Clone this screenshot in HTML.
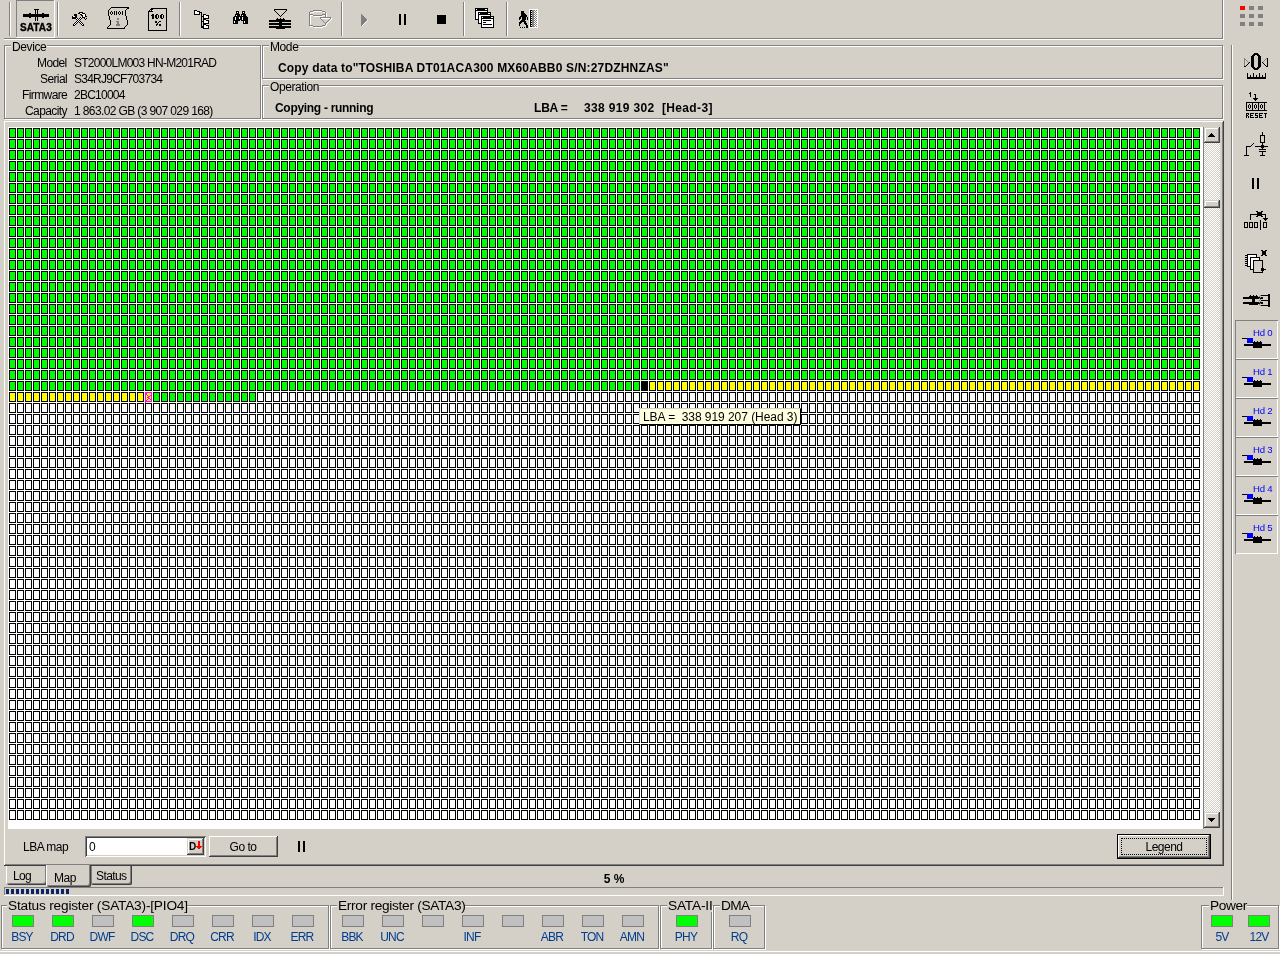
<!DOCTYPE html>
<html><head><meta charset="utf-8"><style>
html,body{margin:0;padding:0;}
body{width:1280px;height:954px;background:#d4d0c8;position:relative;overflow:hidden;font-family:"Liberation Sans",sans-serif;}
body>div,body>svg{position:absolute;}
.t{position:absolute;will-change:transform;}
svg{display:block;}
</style></head><body>
<div style="left:9px;top:2px;width:1px;height:34px;background:#808080;"></div>
<div style="left:10px;top:2px;width:1px;height:34px;background:#ffffff;"></div>
<div style="left:16px;top:0px;width:1px;height:37px;background:#808080;"></div>
<div style="left:16px;top:0px;width:38px;height:1px;background:#808080;"></div>
<div style="left:54px;top:0px;width:1px;height:38px;background:#ffffff;"></div>
<div style="left:16px;top:37px;width:39px;height:1px;background:#ffffff;"></div>
<div style="left:57px;top:2px;width:1px;height:34px;background:#808080;"></div>
<div style="left:58px;top:2px;width:1px;height:34px;background:#ffffff;"></div>
<div style="left:179px;top:2px;width:1px;height:34px;background:#808080;"></div>
<div style="left:180px;top:2px;width:1px;height:34px;background:#ffffff;"></div>
<div style="left:341px;top:2px;width:1px;height:34px;background:#808080;"></div>
<div style="left:342px;top:2px;width:1px;height:34px;background:#ffffff;"></div>
<div style="left:463px;top:2px;width:1px;height:34px;background:#808080;"></div>
<div style="left:464px;top:2px;width:1px;height:34px;background:#ffffff;"></div>
<div style="left:506px;top:2px;width:1px;height:34px;background:#808080;"></div>
<div style="left:507px;top:2px;width:1px;height:34px;background:#ffffff;"></div>
<div style="left:4px;top:38px;width:1219px;height:1px;background:#808080;"></div>
<div style="left:4px;top:39px;width:1220px;height:1px;background:#ffffff;"></div>
<div style="left:1222px;top:0px;width:1px;height:39px;background:#808080;"></div>
<div style="left:1223px;top:0px;width:1px;height:40px;background:#ffffff;"></div>
<svg style="left:23px;top:9px;" width="26" height="12" shape-rendering="crispEdges"><path fill="#000" d="M11 0h5v1h-5zM12 1h1v1h-1zM14 1h1v1h-1zM12 2h1v1h-1zM14 2h1v1h-1zM12 3h1v1h-1zM14 3h1v1h-1zM6 4h2v1h-2zM12 4h1v1h-1zM14 4h1v1h-1zM19 4h2v1h-2zM0 5h26v1h-26zM0 6h26v1h-26zM0 7h26v1h-26zM6 8h2v1h-2zM12 8h1v1h-1zM14 8h1v1h-1zM19 8h2v1h-2zM12 9h1v1h-1zM14 9h1v1h-1zM12 10h1v1h-1zM14 10h1v1h-1zM12 11h1v1h-1zM14 11h1v1h-1z"/></svg>
<div class="t" style="left:20px;top:23px;font-size:10px;line-height:10px;font-weight:bold;letter-spacing:0.1px;-webkit-text-stroke:0.35px #000">SATA3</div>
<svg style="left:72px;top:12px;" width="15" height="14" shape-rendering="crispEdges"><path fill="#000" d="M7 0h4v1h-4zM6 1h2v1h-2zM10 1h3v1h-3zM2 2h3v1h-3zM8 2h2v1h-2zM13 2h1v1h-1zM2 3h3v1h-3zM9 3h2v1h-2zM13 3h1v1h-1zM0 4h1v1h-1zM3 4h2v1h-2zM10 4h1v1h-1zM13 4h2v1h-2zM0 5h5v1h-5zM8 5h1v1h-1zM10 5h3v1h-3zM0 6h4v1h-4zM5 6h1v1h-1zM7 6h1v1h-1zM9 6h1v1h-1zM12 6h1v1h-1zM14 6h1v1h-1zM4 7h1v1h-1zM6 7h1v1h-1zM8 7h1v1h-1zM13 7h1v1h-1zM5 8h1v1h-1zM7 8h1v1h-1zM4 9h1v1h-1zM6 9h1v1h-1zM8 9h1v1h-1zM3 10h1v1h-1zM5 10h1v1h-1zM7 10h1v1h-1zM9 10h1v1h-1zM2 11h1v1h-1zM4 11h1v1h-1zM8 11h1v1h-1zM10 11h1v1h-1zM1 12h1v1h-1zM3 12h1v1h-1zM9 12h1v1h-1zM11 12h1v1h-1zM1 13h2v1h-2zM10 13h2v1h-2z"/><path fill="#fff" d="M8 1h2v1h-2zM10 2h3v1h-3zM11 3h2v1h-2zM1 4h2v1h-2zM11 4h2v1h-2zM9 5h1v1h-1zM4 6h1v1h-1zM8 6h1v1h-1zM5 7h1v1h-1zM7 7h1v1h-1zM6 8h1v1h-1zM5 9h1v1h-1zM7 9h1v1h-1zM4 10h1v1h-1zM8 10h1v1h-1zM3 11h1v1h-1zM9 11h1v1h-1zM2 12h1v1h-1zM10 12h1v1h-1z"/></svg>
<svg style="left:106px;top:7px;" width="24" height="22" shape-rendering="crispEdges"><path fill="#000" d="M5 0h18v1h-18zM4 1h1v1h-1zM21 1h2v1h-2zM3 2h1v1h-1zM20 2h1v1h-1zM2 3h1v1h-1zM19 3h1v1h-1zM2 4h1v1h-1zM5 4h1v1h-1zM8 4h1v1h-1zM10 4h1v1h-1zM13 4h1v1h-1zM16 4h1v1h-1zM19 4h1v1h-1zM2 5h1v1h-1zM4 5h1v1h-1zM6 5h1v1h-1zM8 5h1v1h-1zM10 5h1v1h-1zM12 5h1v1h-1zM14 5h1v1h-1zM16 5h1v1h-1zM19 5h1v1h-1zM2 6h1v1h-1zM4 6h1v1h-1zM6 6h1v1h-1zM8 6h1v1h-1zM10 6h1v1h-1zM12 6h1v1h-1zM14 6h1v1h-1zM16 6h1v1h-1zM19 6h1v1h-1zM2 7h1v1h-1zM5 7h1v1h-1zM8 7h1v1h-1zM10 7h1v1h-1zM13 7h1v1h-1zM16 7h1v1h-1zM19 7h1v1h-1zM2 8h1v1h-1zM19 8h1v1h-1zM3 9h1v1h-1zM20 9h1v1h-1zM3 10h1v1h-1zM20 10h1v1h-1zM3 11h1v1h-1zM20 11h1v1h-1zM3 12h1v1h-1zM20 12h1v1h-1zM4 13h1v1h-1zM21 13h1v1h-1zM4 14h1v1h-1zM21 14h1v1h-1zM4 15h1v1h-1zM21 15h1v1h-1zM4 16h1v1h-1zM21 16h1v1h-1zM4 17h1v1h-1zM21 17h1v1h-1zM3 18h1v1h-1zM20 18h1v1h-1zM2 19h1v1h-1zM19 19h1v1h-1zM1 20h1v1h-1zM18 20h1v1h-1zM1 21h18v1h-18z"/></svg>
<svg style="left:116px;top:18px;" width="4" height="8" shape-rendering="crispEdges"><path fill="#808080" d="M1 0h2v1h-2zM1 1h2v1h-2zM0 3h3v1h-3zM1 4h2v1h-2zM1 5h2v1h-2zM0 6h4v1h-4zM0 7h4v1h-4z"/></svg>
<svg style="left:148px;top:8px;" width="19" height="23" shape-rendering="crispEdges"><path fill="#000" d="M3 0h16v1h-16zM2 1h3v1h-3zM18 1h1v1h-1zM1 2h1v1h-1zM3 2h2v1h-2zM18 2h1v1h-1zM0 3h5v1h-5zM18 3h1v1h-1zM0 4h1v1h-1zM18 4h1v1h-1zM0 5h1v1h-1zM18 5h1v1h-1zM0 6h1v1h-1zM4 6h2v1h-2zM8 6h2v1h-2zM13 6h2v1h-2zM18 6h1v1h-1zM0 7h1v1h-1zM3 7h3v1h-3zM7 7h2v1h-2zM10 7h1v1h-1zM12 7h2v1h-2zM15 7h1v1h-1zM18 7h1v1h-1zM0 8h1v1h-1zM4 8h2v1h-2zM7 8h2v1h-2zM10 8h1v1h-1zM12 8h2v1h-2zM15 8h1v1h-1zM18 8h1v1h-1zM0 9h1v1h-1zM4 9h2v1h-2zM7 9h2v1h-2zM10 9h1v1h-1zM12 9h2v1h-2zM15 9h1v1h-1zM18 9h1v1h-1zM0 10h1v1h-1zM4 10h2v1h-2zM8 10h2v1h-2zM13 10h2v1h-2zM18 10h1v1h-1zM0 11h1v1h-1zM18 11h1v1h-1zM0 12h1v1h-1zM18 12h1v1h-1zM0 13h1v1h-1zM7 13h2v1h-2zM11 13h2v1h-2zM18 13h1v1h-1zM0 14h1v1h-1zM7 14h2v1h-2zM10 14h1v1h-1zM18 14h1v1h-1zM0 15h1v1h-1zM9 15h1v1h-1zM18 15h1v1h-1zM0 16h1v1h-1zM8 16h2v1h-2zM11 16h2v1h-2zM18 16h1v1h-1zM0 17h1v1h-1zM8 17h1v1h-1zM11 17h2v1h-2zM18 17h1v1h-1zM0 18h1v1h-1zM18 18h1v1h-1zM0 19h1v1h-1zM18 19h1v1h-1zM0 20h1v1h-1zM18 20h1v1h-1zM0 21h1v1h-1zM18 21h1v1h-1zM0 22h19v1h-19z"/></svg>
<svg style="left:152px;top:10px;" width="1" height="1" shape-rendering="crispEdges"><path fill="#fff" d="M0 0h1v1h-1z"/></svg>
<svg style="left:194px;top:10px;" width="6" height="5" shape-rendering="crispEdges"><path fill="#000" d="M0 0h3v1h-3zM0 1h1v1h-1zM3 1h3v1h-3zM0 2h1v1h-1zM5 2h1v1h-1zM0 3h1v1h-1zM5 3h1v1h-1zM0 4h6v1h-6z"/><path fill="#fff" d="M1 1h2v1h-2zM1 2h4v1h-4zM1 3h4v1h-4z"/></svg>
<svg style="left:200px;top:12px;" width="3" height="16" shape-rendering="crispEdges"><path fill="#000" d="M0 0h2v1h-2zM1 1h1v1h-1zM1 2h1v1h-1zM1 3h1v1h-1zM1 4h1v1h-1zM1 5h1v1h-1zM1 6h1v1h-1zM1 7h1v1h-1zM1 8h1v1h-1zM1 9h1v1h-1zM1 10h1v1h-1zM1 11h1v1h-1zM1 12h1v1h-1zM1 13h1v1h-1zM1 14h1v1h-1zM1 15h2v1h-2z"/></svg>
<svg style="left:203px;top:14px;" width="6" height="5" shape-rendering="crispEdges"><path fill="#000" d="M0 0h3v1h-3zM0 1h1v1h-1zM3 1h3v1h-3zM0 2h1v1h-1zM5 2h1v1h-1zM0 3h1v1h-1zM5 3h1v1h-1zM0 4h6v1h-6z"/><path fill="#fff" d="M1 1h2v1h-2zM1 2h4v1h-4zM1 3h4v1h-4z"/></svg>
<div style="left:202px;top:16px;width:1px;height:1px;background:#000;"></div>
<svg style="left:203px;top:19px;" width="6" height="5" shape-rendering="crispEdges"><path fill="#000" d="M0 0h3v1h-3zM0 1h1v1h-1zM3 1h3v1h-3zM0 2h1v1h-1zM5 2h1v1h-1zM0 3h1v1h-1zM5 3h1v1h-1zM0 4h6v1h-6z"/><path fill="#fff" d="M1 1h2v1h-2zM1 2h4v1h-4zM1 3h4v1h-4z"/></svg>
<div style="left:202px;top:21px;width:1px;height:1px;background:#000;"></div>
<svg style="left:203px;top:24px;" width="6" height="5" shape-rendering="crispEdges"><path fill="#000" d="M0 0h3v1h-3zM0 1h1v1h-1zM3 1h3v1h-3zM0 2h1v1h-1zM5 2h1v1h-1zM0 3h1v1h-1zM5 3h1v1h-1zM0 4h6v1h-6z"/><path fill="#fff" d="M1 1h2v1h-2zM1 2h4v1h-4zM1 3h4v1h-4z"/></svg>
<div style="left:202px;top:26px;width:1px;height:1px;background:#000;"></div>
<svg style="left:233px;top:11px;" width="15" height="13" shape-rendering="crispEdges"><path fill="#000" d="M3 0h3v1h-3zM9 0h3v1h-3zM3 1h1v1h-1zM5 1h1v1h-1zM9 1h1v1h-1zM11 1h1v1h-1zM3 2h3v1h-3zM9 2h3v1h-3zM2 3h5v1h-5zM8 3h5v1h-5zM2 4h1v1h-1zM4 4h3v1h-3zM8 4h1v1h-1zM10 4h3v1h-3zM1 5h13v1h-13zM0 6h2v1h-2zM3 6h3v1h-3zM7 6h2v1h-2zM10 6h5v1h-5zM0 7h2v1h-2zM3 7h3v1h-3zM7 7h2v1h-2zM10 7h5v1h-5zM0 8h2v1h-2zM3 8h6v1h-6zM10 8h5v1h-5zM0 9h7v1h-7zM8 9h7v1h-7zM0 10h1v1h-1zM2 10h3v1h-3zM10 10h1v1h-1zM12 10h3v1h-3zM0 11h1v1h-1zM2 11h3v1h-3zM10 11h1v1h-1zM12 11h3v1h-3zM0 12h5v1h-5zM10 12h5v1h-5z"/><path fill="#fff" d="M4 1h1v1h-1zM10 1h1v1h-1zM3 4h1v1h-1zM9 4h1v1h-1zM2 6h1v1h-1zM6 6h1v1h-1zM9 6h1v1h-1zM2 7h1v1h-1zM6 7h1v1h-1zM9 7h1v1h-1zM2 8h1v1h-1zM9 8h1v1h-1zM1 10h1v1h-1zM11 10h1v1h-1zM1 11h1v1h-1zM11 11h1v1h-1z"/></svg>
<svg style="left:269px;top:9px;" width="22" height="20" shape-rendering="crispEdges"><path fill="#000" d="M5 0h13v1h-13zM5 1h1v1h-1zM17 1h1v1h-1zM6 2h1v1h-1zM16 2h1v1h-1zM7 3h1v1h-1zM15 3h1v1h-1zM8 4h1v1h-1zM14 4h1v1h-1zM9 5h1v1h-1zM13 5h1v1h-1zM10 6h1v1h-1zM12 6h1v1h-1zM11 7h1v1h-1zM8 9h1v1h-1zM11 9h1v1h-1zM14 9h1v1h-1zM7 10h9v1h-9zM0 11h22v1h-22zM0 12h22v1h-22zM10 13h3v1h-3zM0 14h22v1h-22zM0 15h22v1h-22zM10 16h3v1h-3zM0 17h22v1h-22zM0 18h22v1h-22zM7 19h9v1h-9z"/></svg>
<svg style="left:309px;top:10px;" width="23" height="18" shape-rendering="crispEdges"><path fill="#808080" d="M4 0h9v1h-9zM1 1h3v1h-3zM13 1h3v1h-3zM0 2h1v1h-1zM16 2h1v1h-1zM0 3h1v1h-1zM16 3h1v1h-1zM0 4h4v1h-4zM13 4h4v1h-4zM0 5h1v1h-1zM4 5h9v1h-9zM16 5h1v1h-1zM0 6h1v1h-1zM16 6h1v1h-1zM0 7h1v1h-1zM11 7h11v1h-11zM0 8h1v1h-1zM11 8h1v1h-1zM21 8h1v1h-1zM0 9h1v1h-1zM12 9h1v1h-1zM20 9h1v1h-1zM0 10h1v1h-1zM13 10h1v1h-1zM19 10h1v1h-1zM0 11h1v1h-1zM14 11h1v1h-1zM18 11h1v1h-1zM0 12h1v1h-1zM15 12h1v1h-1zM17 12h1v1h-1zM0 13h1v1h-1zM16 13h1v1h-1zM0 14h1v1h-1zM16 14h1v1h-1zM0 15h4v1h-4zM13 15h3v1h-3zM4 16h9v1h-9z"/><path fill="#fff" d="M5 1h8v1h-8zM2 2h3v1h-3zM14 2h2v1h-2zM1 3h1v1h-1zM17 3h1v1h-1zM17 4h1v1h-1zM1 5h3v1h-3zM14 5h2v1h-2zM17 5h1v1h-1zM1 6h1v1h-1zM5 6h9v1h-9zM17 6h1v1h-1zM1 7h1v1h-1zM1 8h1v1h-1zM12 8h9v1h-9zM22 8h1v1h-1zM1 9h1v1h-1zM22 9h1v1h-1zM1 10h1v1h-1zM21 10h1v1h-1zM1 11h1v1h-1zM20 11h1v1h-1zM1 12h1v1h-1zM19 12h1v1h-1zM1 13h1v1h-1zM18 13h1v1h-1zM1 14h1v1h-1zM17 14h1v1h-1zM17 15h1v1h-1zM1 16h3v1h-3zM14 16h3v1h-3zM5 17h9v1h-9z"/></svg>
<svg style="left:361px;top:14px;" width="8" height="13" shape-rendering="crispEdges"><path fill="#808080" d="M0 0h1v1h-1zM0 1h2v1h-2zM0 2h3v1h-3zM0 3h4v1h-4zM0 4h5v1h-5zM0 5h6v1h-6zM0 6h6v1h-6zM0 7h5v1h-5zM0 8h4v1h-4zM0 9h3v1h-3zM0 10h2v1h-2zM0 11h1v1h-1z"/></svg>
<svg style="left:361px;top:14px;" width="8" height="13" shape-rendering="crispEdges"><path fill="#fff" d="M6 6h1v1h-1zM5 7h1v1h-1zM4 8h1v1h-1zM3 9h1v1h-1zM2 10h1v1h-1zM1 11h1v1h-1z"/></svg>
<div style="left:399px;top:14px;width:2px;height:11px;background:#000;"></div>
<div style="left:404px;top:14px;width:2px;height:11px;background:#000;"></div>
<div style="left:437px;top:15px;width:9px;height:9px;background:#000;"></div>
<svg style="left:475px;top:8px;" width="13" height="12" shape-rendering="crispEdges"><path fill="#000" d="M0 0h13v1h-13zM0 1h1v1h-1zM2 1h8v1h-8zM12 1h1v1h-1zM0 2h13v1h-13zM0 3h1v1h-1zM12 3h1v1h-1zM0 4h1v1h-1zM12 4h1v1h-1zM0 5h1v1h-1zM12 5h1v1h-1zM0 6h1v1h-1zM12 6h1v1h-1zM0 7h1v1h-1zM12 7h1v1h-1zM0 8h1v1h-1zM12 8h1v1h-1zM0 9h1v1h-1zM12 9h1v1h-1zM0 10h1v1h-1zM12 10h1v1h-1zM0 11h13v1h-13z"/><path fill="#fff" d="M1 1h1v1h-1zM10 1h2v1h-2zM1 3h11v1h-11zM1 4h11v1h-11zM1 5h11v1h-11zM1 6h11v1h-11zM1 7h11v1h-11zM1 8h11v1h-11zM1 9h11v1h-11zM1 10h11v1h-11z"/></svg>
<svg style="left:478px;top:12px;" width="13" height="12" shape-rendering="crispEdges"><path fill="#000" d="M0 0h13v1h-13zM0 1h1v1h-1zM2 1h8v1h-8zM12 1h1v1h-1zM0 2h13v1h-13zM0 3h1v1h-1zM12 3h1v1h-1zM0 4h1v1h-1zM12 4h1v1h-1zM0 5h1v1h-1zM12 5h1v1h-1zM0 6h1v1h-1zM12 6h1v1h-1zM0 7h1v1h-1zM12 7h1v1h-1zM0 8h1v1h-1zM12 8h1v1h-1zM0 9h1v1h-1zM12 9h1v1h-1zM0 10h1v1h-1zM12 10h1v1h-1zM0 11h13v1h-13z"/><path fill="#fff" d="M1 1h1v1h-1zM10 1h2v1h-2zM1 3h11v1h-11zM1 4h11v1h-11zM1 5h11v1h-11zM1 6h11v1h-11zM1 7h11v1h-11zM1 8h11v1h-11zM1 9h11v1h-11zM1 10h11v1h-11z"/></svg>
<svg style="left:481px;top:16px;" width="13" height="12" shape-rendering="crispEdges"><path fill="#000" d="M0 0h13v1h-13zM0 1h1v1h-1zM2 1h8v1h-8zM12 1h1v1h-1zM0 2h13v1h-13zM0 3h1v1h-1zM12 3h1v1h-1zM0 4h1v1h-1zM12 4h1v1h-1zM0 5h1v1h-1zM12 5h1v1h-1zM0 6h1v1h-1zM12 6h1v1h-1zM0 7h1v1h-1zM12 7h1v1h-1zM0 8h1v1h-1zM12 8h1v1h-1zM0 9h1v1h-1zM12 9h1v1h-1zM0 10h1v1h-1zM12 10h1v1h-1zM0 11h13v1h-13z"/><path fill="#fff" d="M1 1h1v1h-1zM10 1h2v1h-2zM1 3h11v1h-11zM1 4h11v1h-11zM1 5h11v1h-11zM1 6h11v1h-11zM1 7h11v1h-11zM1 8h11v1h-11zM1 9h11v1h-11zM1 10h11v1h-11z"/></svg>
<div style="left:483px;top:20px;width:8px;height:1px;background:#000;"></div>
<div style="left:483px;top:22px;width:3px;height:1px;background:#000;"></div>
<div style="left:483px;top:24px;width:9px;height:1px;background:#000;"></div>
<svg style="left:518px;top:11px;" width="11" height="17" shape-rendering="crispEdges"><path fill="#000" d="M3 0h3v1h-3zM3 1h3v1h-3zM3 2h4v1h-4zM3 3h5v1h-5zM3 4h6v1h-6zM2 5h7v1h-7zM1 6h2v1h-2zM4 6h4v1h-4zM9 6h1v1h-1zM1 7h2v1h-2zM4 7h4v1h-4zM9 7h1v1h-1zM1 8h1v1h-1zM4 8h4v1h-4zM9 8h1v1h-1zM3 9h4v1h-4zM2 10h6v1h-6zM1 11h3v1h-3zM6 11h2v1h-2zM1 12h2v1h-2zM6 12h3v1h-3zM1 13h1v1h-1zM7 13h2v1h-2zM1 14h1v1h-1zM8 14h2v1h-2zM8 15h2v1h-2zM2 16h1v1h-1zM4 16h1v1h-1zM6 16h1v1h-1zM8 16h2v1h-2z"/></svg>
<div style="left:529px;top:9px;width:9px;height:19px;background:#fff;"></div>
<svg style="left:530px;top:10px;" width="7" height="17" shape-rendering="crispEdges"><path fill="#000" d="M0 0h2v1h-2zM0 1h1v1h-1zM0 2h2v1h-2zM0 3h1v1h-1zM0 4h2v1h-2zM0 5h1v1h-1zM0 6h2v1h-2zM0 7h1v1h-1zM0 8h2v1h-2zM0 9h1v1h-1zM0 10h2v1h-2zM0 11h1v1h-1zM0 12h2v1h-2zM0 13h1v1h-1zM0 14h2v1h-2zM0 15h1v1h-1zM0 16h2v1h-2z"/><path fill="#808080" d="M2 0h3v1h-3zM6 0h1v1h-1zM2 1h2v1h-2zM5 1h1v1h-1zM2 2h3v1h-3zM6 2h1v1h-1zM2 3h2v1h-2zM5 3h1v1h-1zM2 4h3v1h-3zM6 4h1v1h-1zM2 5h2v1h-2zM5 5h1v1h-1zM2 6h3v1h-3zM6 6h1v1h-1zM2 7h2v1h-2zM5 7h1v1h-1zM2 8h3v1h-3zM6 8h1v1h-1zM2 9h2v1h-2zM5 9h1v1h-1zM2 10h3v1h-3zM6 10h1v1h-1zM2 11h2v1h-2zM5 11h1v1h-1zM2 12h3v1h-3zM6 12h1v1h-1zM2 13h2v1h-2zM5 13h1v1h-1zM2 14h3v1h-3zM6 14h1v1h-1zM2 15h2v1h-2zM5 15h1v1h-1zM2 16h3v1h-3zM6 16h1v1h-1z"/><path fill="#fff" d="M5 0h1v1h-1zM4 1h1v1h-1zM6 1h1v1h-1zM5 2h1v1h-1zM4 3h1v1h-1zM6 3h1v1h-1zM5 4h1v1h-1zM4 5h1v1h-1zM6 5h1v1h-1zM5 6h1v1h-1zM4 7h1v1h-1zM6 7h1v1h-1zM5 8h1v1h-1zM4 9h1v1h-1zM6 9h1v1h-1zM5 10h1v1h-1zM4 11h1v1h-1zM6 11h1v1h-1zM5 12h1v1h-1zM4 13h1v1h-1zM6 13h1v1h-1zM5 14h1v1h-1zM4 15h1v1h-1zM6 15h1v1h-1zM5 16h1v1h-1z"/></svg>
<div style="left:1240px;top:6px;width:5px;height:4px;background:#ff0000;"></div>
<div style="left:1249px;top:6px;width:5px;height:4px;background:#808080;"></div>
<div style="left:1258px;top:6px;width:5px;height:4px;background:#808080;"></div>
<div style="left:1240px;top:14px;width:5px;height:4px;background:#808080;"></div>
<div style="left:1249px;top:14px;width:5px;height:4px;background:#808080;"></div>
<div style="left:1258px;top:14px;width:5px;height:4px;background:#808080;"></div>
<div style="left:1240px;top:22px;width:5px;height:4px;background:#808080;"></div>
<div style="left:1249px;top:22px;width:5px;height:4px;background:#808080;"></div>
<div style="left:1258px;top:22px;width:5px;height:4px;background:#808080;"></div>
<svg style="left:1251px;top:53px;" width="10" height="17" shape-rendering="crispEdges"><path fill="#000" d="M3 0h4v1h-4zM2 1h6v1h-6zM1 2h3v1h-3zM6 2h3v1h-3zM0 3h3v1h-3zM7 3h3v1h-3zM0 4h3v1h-3zM7 4h3v1h-3zM0 5h3v1h-3zM7 5h3v1h-3zM0 6h3v1h-3zM7 6h3v1h-3zM0 7h3v1h-3zM7 7h3v1h-3zM0 8h3v1h-3zM7 8h3v1h-3zM0 9h3v1h-3zM7 9h3v1h-3zM0 10h3v1h-3zM7 10h3v1h-3zM0 11h3v1h-3zM7 11h3v1h-3zM0 12h3v1h-3zM7 12h3v1h-3zM0 13h3v1h-3zM7 13h3v1h-3zM1 14h3v1h-3zM6 14h3v1h-3zM2 15h6v1h-6zM3 16h4v1h-4z"/></svg>
<svg style="left:1244px;top:58px;" width="24" height="9" shape-rendering="crispEdges"><path fill="#808080" d="M0 0h1v1h-1zM0 1h2v1h-2zM0 2h1v1h-1zM2 2h1v1h-1zM0 3h1v1h-1zM3 3h1v1h-1zM0 4h1v1h-1zM4 4h1v1h-1zM0 5h1v1h-1zM0 6h1v1h-1zM0 7h1v1h-1zM0 8h1v1h-1z"/></svg>
<svg style="left:1244px;top:58px;" width="24" height="9" shape-rendering="crispEdges"><path fill="#000" d="M23 0h1v1h-1zM23 1h1v1h-1zM23 2h1v1h-1zM23 3h1v1h-1zM5 4h1v1h-1zM18 4h1v1h-1zM23 4h1v1h-1zM4 5h1v1h-1zM19 5h1v1h-1zM23 5h1v1h-1zM3 6h1v1h-1zM20 6h1v1h-1zM23 6h1v1h-1zM2 7h1v1h-1zM21 7h1v1h-1zM23 7h1v1h-1zM0 8h2v1h-2zM22 8h2v1h-2z"/></svg>
<svg style="left:1244px;top:58px;" width="24" height="9" shape-rendering="crispEdges"><path fill="#808080" d="M22 0h1v1h-1zM21 1h1v1h-1zM20 2h1v1h-1zM19 3h1v1h-1z"/></svg>
<svg style="left:1247px;top:73px;" width="19" height="6" shape-rendering="crispEdges"><path fill="#000" d="M0 0h1v1h-1zM6 0h1v1h-1zM12 0h1v1h-1zM18 0h1v1h-1zM0 1h1v1h-1zM6 1h1v1h-1zM12 1h1v1h-1zM18 1h1v1h-1zM0 2h1v1h-1zM3 2h1v1h-1zM6 2h1v1h-1zM9 2h1v1h-1zM12 2h1v1h-1zM15 2h1v1h-1zM18 2h1v1h-1zM0 3h1v1h-1zM3 3h1v1h-1zM6 3h1v1h-1zM9 3h1v1h-1zM12 3h1v1h-1zM15 3h1v1h-1zM18 3h1v1h-1zM0 4h19v1h-19zM0 5h19v1h-19z"/></svg>
<svg style="left:1244px;top:92px;" width="24" height="19" shape-rendering="crispEdges"><path fill="#000" d="M6 0h1v1h-1zM5 1h2v1h-2zM6 2h1v1h-1zM10 2h2v1h-2zM6 3h1v1h-1zM11 3h1v1h-1zM6 4h1v1h-1zM11 4h1v1h-1zM11 5h1v1h-1zM9 6h5v1h-5zM10 7h3v1h-3zM11 8h1v1h-1zM2 10h21v1h-21zM2 11h1v1h-1zM8 11h1v1h-1zM14 11h1v1h-1zM20 11h1v1h-1zM2 12h1v1h-1zM5 12h1v1h-1zM8 12h1v1h-1zM11 12h1v1h-1zM14 12h1v1h-1zM17 12h1v1h-1zM20 12h1v1h-1zM2 13h1v1h-1zM4 13h1v1h-1zM6 13h1v1h-1zM8 13h1v1h-1zM10 13h1v1h-1zM12 13h1v1h-1zM14 13h1v1h-1zM16 13h1v1h-1zM18 13h1v1h-1zM20 13h1v1h-1zM2 14h1v1h-1zM4 14h1v1h-1zM6 14h1v1h-1zM8 14h1v1h-1zM10 14h1v1h-1zM12 14h1v1h-1zM14 14h1v1h-1zM16 14h1v1h-1zM18 14h1v1h-1zM20 14h1v1h-1zM2 15h1v1h-1zM4 15h1v1h-1zM6 15h1v1h-1zM8 15h1v1h-1zM10 15h1v1h-1zM12 15h1v1h-1zM14 15h1v1h-1zM16 15h1v1h-1zM18 15h1v1h-1zM20 15h1v1h-1zM2 16h1v1h-1zM5 16h1v1h-1zM8 16h1v1h-1zM11 16h1v1h-1zM14 16h1v1h-1zM17 16h1v1h-1zM20 16h1v1h-1zM2 17h1v1h-1zM8 17h1v1h-1zM14 17h1v1h-1zM20 17h1v1h-1zM2 18h21v1h-21z"/></svg>
<svg style="left:1246px;top:113px;" width="21" height="5" shape-rendering="crispEdges"><path fill="#000" d="M0 0h3v1h-3zM4 0h4v1h-4zM9 0h3v1h-3zM13 0h4v1h-4zM18 0h3v1h-3zM0 1h1v1h-1zM2 1h1v1h-1zM4 1h1v1h-1zM9 1h1v1h-1zM13 1h1v1h-1zM19 1h1v1h-1zM0 2h2v1h-2zM4 2h3v1h-3zM9 2h3v1h-3zM13 2h3v1h-3zM19 2h1v1h-1zM0 3h1v1h-1zM2 3h1v1h-1zM4 3h1v1h-1zM11 3h1v1h-1zM13 3h1v1h-1zM19 3h1v1h-1zM0 4h1v1h-1zM2 4h1v1h-1zM4 4h4v1h-4zM9 4h3v1h-3zM13 4h4v1h-4zM19 4h1v1h-1z"/></svg>
<svg style="left:1244px;top:132px;" width="24" height="24" shape-rendering="crispEdges"><path fill="#000" d="M18 0h1v1h-1zM18 1h1v1h-1zM18 2h1v1h-1zM16 3h5v1h-5zM16 4h1v1h-1zM20 4h1v1h-1zM16 5h1v1h-1zM20 5h1v1h-1zM16 6h1v1h-1zM20 6h1v1h-1zM16 7h1v1h-1zM20 7h1v1h-1zM16 8h1v1h-1zM20 8h1v1h-1zM16 9h1v1h-1zM20 9h1v1h-1zM16 10h5v1h-5zM9 11h1v1h-1zM18 11h1v1h-1zM8 12h1v1h-1zM18 12h1v1h-1zM7 13h1v1h-1zM17 13h3v1h-3zM2 14h5v1h-5zM11 14h13v1h-13zM2 15h1v1h-1zM17 15h3v1h-3zM2 16h1v1h-1zM18 16h1v1h-1zM2 17h1v1h-1zM15 17h7v1h-7zM2 18h1v1h-1zM2 19h1v1h-1zM15 19h7v1h-7zM2 20h1v1h-1zM18 20h1v1h-1zM2 21h1v1h-1zM18 21h1v1h-1zM2 22h1v1h-1zM18 22h1v1h-1zM0 23h5v1h-5zM16 23h5v1h-5z"/></svg>
<div style="left:1252px;top:178px;width:2px;height:11px;background:#000;"></div>
<div style="left:1257px;top:178px;width:2px;height:11px;background:#000;"></div>
<svg style="left:1244px;top:211px;" width="24" height="19" shape-rendering="crispEdges"><path fill="#000" d="M12 0h2v1h-2zM17 0h2v1h-2zM13 1h5v1h-5zM13 2h5v1h-5zM6 3h16v1h-16zM6 4h1v1h-1zM13 4h5v1h-5zM21 4h1v1h-1zM6 5h1v1h-1zM12 5h2v1h-2zM17 5h2v1h-2zM21 5h1v1h-1zM6 6h1v1h-1zM21 6h1v1h-1zM6 7h1v1h-1zM19 7h5v1h-5zM6 8h1v1h-1zM20 8h3v1h-3zM16 9h1v1h-1zM21 9h1v1h-1zM16 10h1v1h-1zM0 11h4v1h-4zM5 11h4v1h-4zM10 11h4v1h-4zM16 11h1v1h-1zM19 11h4v1h-4zM0 12h1v1h-1zM3 12h1v1h-1zM5 12h1v1h-1zM8 12h1v1h-1zM10 12h1v1h-1zM13 12h1v1h-1zM16 12h1v1h-1zM19 12h1v1h-1zM22 12h1v1h-1zM0 13h1v1h-1zM3 13h1v1h-1zM5 13h1v1h-1zM8 13h1v1h-1zM10 13h1v1h-1zM13 13h1v1h-1zM16 13h1v1h-1zM19 13h1v1h-1zM22 13h1v1h-1zM0 14h1v1h-1zM3 14h1v1h-1zM5 14h1v1h-1zM8 14h1v1h-1zM10 14h1v1h-1zM13 14h1v1h-1zM16 14h1v1h-1zM19 14h1v1h-1zM22 14h1v1h-1zM0 15h1v1h-1zM3 15h1v1h-1zM5 15h1v1h-1zM8 15h1v1h-1zM10 15h1v1h-1zM13 15h1v1h-1zM16 15h1v1h-1zM19 15h1v1h-1zM22 15h1v1h-1zM0 16h4v1h-4zM5 16h4v1h-4zM10 16h4v1h-4zM16 16h1v1h-1zM19 16h4v1h-4zM16 17h1v1h-1zM16 18h1v1h-1z"/></svg>
<svg style="left:1244px;top:249px;" width="24" height="24" shape-rendering="crispEdges"><path fill="#000" d="M17 1h2v1h-2zM21 1h2v1h-2zM18 2h4v1h-4zM18 3h4v1h-4zM18 4h4v1h-4zM18 5h4v1h-4zM1 6h2v1h-2zM17 6h2v1h-2zM21 6h2v1h-2zM1 8h2v1h-2zM1 10h2v1h-2zM1 12h2v1h-2zM1 14h2v1h-2zM1 16h2v1h-2zM17 19h3v1h-3zM17 20h5v1h-5zM17 21h3v1h-3z"/></svg>
<div style="left:1247px;top:254px;width:10px;height:13px;background:#fff;box-shadow: inset 0 0 0 1px #000"></div>
<div style="left:1250px;top:257px;width:10px;height:13px;background:#fff;box-shadow: inset 0 0 0 1px #000"></div>
<div style="left:1253px;top:260px;width:10px;height:13px;background:#d4d0c8;box-shadow: inset 0 0 0 1px #000"></div>
<div style="left:1261px;top:268px;width:3px;height:3px;background:#000;"></div>
<div style="left:1264px;top:269px;width:2px;height:1px;background:#000;"></div>
<svg style="left:1243px;top:294px;" width="27" height="13" shape-rendering="crispEdges"><path fill="#000" d="M25 0h2v1h-2zM7 1h1v1h-1zM10 1h1v1h-1zM13 1h1v1h-1zM18 1h9v1h-9zM6 2h9v1h-9zM25 2h2v1h-2zM0 3h20v1h-20zM25 3h2v1h-2zM0 4h20v1h-20zM25 4h2v1h-2zM9 5h3v1h-3zM25 5h2v1h-2zM9 6h3v1h-3zM18 6h9v1h-9zM9 7h3v1h-3zM25 7h2v1h-2zM0 8h20v1h-20zM25 8h2v1h-2zM0 9h20v1h-20zM25 9h2v1h-2zM6 10h9v1h-9zM25 10h2v1h-2zM18 11h9v1h-9zM25 12h2v1h-2z"/></svg>
<svg style="left:1259px;top:295px;" width="2" height="11" shape-rendering="crispEdges"><path fill="#808080" d="M1 0h1v1h-1zM0 1h1v1h-1zM1 2h1v1h-1zM0 3h1v1h-1zM1 4h1v1h-1zM0 5h1v1h-1zM1 6h1v1h-1zM0 7h1v1h-1zM1 8h1v1h-1zM0 9h1v1h-1zM1 10h1v1h-1z"/></svg>
<div style="left:1235px;top:320px;width:43px;height:39px;background:#d4d0c8;box-shadow: inset 1px 1px #808080, inset -1px -1px #ffffff"></div>
<div class="t" style="left:1253px;top:328px;font-size:9.6px;line-height:10px;color:#0000ff;letter-spacing:-0.2px">Hd 0</div>
<svg style="left:1242px;top:338px;" width="6" height="1" shape-rendering="crispEdges"><path fill="#000" d="M0 0h6v1h-6z"/></svg>
<svg style="left:1244px;top:344px;" width="27" height="2" shape-rendering="crispEdges"><path fill="#000" d="M0 0h27v1h-27zM0 1h27v1h-27z"/></svg>
<svg style="left:1253px;top:341px;" width="9" height="7" shape-rendering="crispEdges"><path fill="#000" d="M1 0h1v1h-1zM4 0h1v1h-1zM7 0h1v1h-1zM0 1h9v1h-9zM0 2h9v1h-9zM0 3h9v1h-9zM0 4h9v1h-9zM0 5h9v1h-9zM0 6h9v1h-9z"/></svg>
<div style="left:1247px;top:338px;width:6px;height:5px;background:#0000ff;"></div>
<div style="left:1235px;top:359px;width:43px;height:39px;background:#d4d0c8;box-shadow: inset 1px 1px #808080, inset -1px -1px #ffffff"></div>
<div class="t" style="left:1253px;top:367px;font-size:9.6px;line-height:10px;color:#0000ff;letter-spacing:-0.2px">Hd 1</div>
<svg style="left:1242px;top:377px;" width="6" height="1" shape-rendering="crispEdges"><path fill="#000" d="M0 0h6v1h-6z"/></svg>
<svg style="left:1244px;top:383px;" width="27" height="2" shape-rendering="crispEdges"><path fill="#000" d="M0 0h27v1h-27zM0 1h27v1h-27z"/></svg>
<svg style="left:1253px;top:380px;" width="9" height="7" shape-rendering="crispEdges"><path fill="#000" d="M1 0h1v1h-1zM4 0h1v1h-1zM7 0h1v1h-1zM0 1h9v1h-9zM0 2h9v1h-9zM0 3h9v1h-9zM0 4h9v1h-9zM0 5h9v1h-9zM0 6h9v1h-9z"/></svg>
<div style="left:1247px;top:377px;width:6px;height:5px;background:#0000ff;"></div>
<div style="left:1235px;top:398px;width:43px;height:39px;background:#d4d0c8;box-shadow: inset 1px 1px #808080, inset -1px -1px #ffffff"></div>
<div class="t" style="left:1253px;top:406px;font-size:9.6px;line-height:10px;color:#0000ff;letter-spacing:-0.2px">Hd 2</div>
<svg style="left:1242px;top:416px;" width="6" height="1" shape-rendering="crispEdges"><path fill="#000" d="M0 0h6v1h-6z"/></svg>
<svg style="left:1244px;top:422px;" width="27" height="2" shape-rendering="crispEdges"><path fill="#000" d="M0 0h27v1h-27zM0 1h27v1h-27z"/></svg>
<svg style="left:1253px;top:419px;" width="9" height="7" shape-rendering="crispEdges"><path fill="#000" d="M1 0h1v1h-1zM4 0h1v1h-1zM7 0h1v1h-1zM0 1h9v1h-9zM0 2h9v1h-9zM0 3h9v1h-9zM0 4h9v1h-9zM0 5h9v1h-9zM0 6h9v1h-9z"/></svg>
<div style="left:1247px;top:416px;width:6px;height:5px;background:#0000ff;"></div>
<div style="left:1235px;top:437px;width:43px;height:39px;background:#d4d0c8;box-shadow: inset 1px 1px #808080, inset -1px -1px #ffffff"></div>
<div class="t" style="left:1253px;top:445px;font-size:9.6px;line-height:10px;color:#0000ff;letter-spacing:-0.2px">Hd 3</div>
<svg style="left:1242px;top:455px;" width="6" height="1" shape-rendering="crispEdges"><path fill="#000" d="M0 0h6v1h-6z"/></svg>
<svg style="left:1244px;top:461px;" width="27" height="2" shape-rendering="crispEdges"><path fill="#000" d="M0 0h27v1h-27zM0 1h27v1h-27z"/></svg>
<svg style="left:1253px;top:458px;" width="9" height="7" shape-rendering="crispEdges"><path fill="#000" d="M1 0h1v1h-1zM4 0h1v1h-1zM7 0h1v1h-1zM0 1h9v1h-9zM0 2h9v1h-9zM0 3h9v1h-9zM0 4h9v1h-9zM0 5h9v1h-9zM0 6h9v1h-9z"/></svg>
<div style="left:1247px;top:455px;width:6px;height:5px;background:#0000ff;"></div>
<div style="left:1235px;top:476px;width:43px;height:39px;background:#d4d0c8;box-shadow: inset 1px 1px #808080, inset -1px -1px #ffffff"></div>
<div class="t" style="left:1253px;top:484px;font-size:9.6px;line-height:10px;color:#0000ff;letter-spacing:-0.2px">Hd 4</div>
<svg style="left:1242px;top:494px;" width="6" height="1" shape-rendering="crispEdges"><path fill="#000" d="M0 0h6v1h-6z"/></svg>
<svg style="left:1244px;top:500px;" width="27" height="2" shape-rendering="crispEdges"><path fill="#000" d="M0 0h27v1h-27zM0 1h27v1h-27z"/></svg>
<svg style="left:1253px;top:497px;" width="9" height="7" shape-rendering="crispEdges"><path fill="#000" d="M1 0h1v1h-1zM4 0h1v1h-1zM7 0h1v1h-1zM0 1h9v1h-9zM0 2h9v1h-9zM0 3h9v1h-9zM0 4h9v1h-9zM0 5h9v1h-9zM0 6h9v1h-9z"/></svg>
<div style="left:1247px;top:494px;width:6px;height:5px;background:#0000ff;"></div>
<div style="left:1235px;top:515px;width:43px;height:39px;background:#d4d0c8;box-shadow: inset 1px 1px #808080, inset -1px -1px #ffffff"></div>
<div class="t" style="left:1253px;top:523px;font-size:9.6px;line-height:10px;color:#0000ff;letter-spacing:-0.2px">Hd 5</div>
<svg style="left:1242px;top:533px;" width="6" height="1" shape-rendering="crispEdges"><path fill="#000" d="M0 0h6v1h-6z"/></svg>
<svg style="left:1244px;top:539px;" width="27" height="2" shape-rendering="crispEdges"><path fill="#000" d="M0 0h27v1h-27zM0 1h27v1h-27z"/></svg>
<svg style="left:1253px;top:536px;" width="9" height="7" shape-rendering="crispEdges"><path fill="#000" d="M1 0h1v1h-1zM4 0h1v1h-1zM7 0h1v1h-1zM0 1h9v1h-9zM0 2h9v1h-9zM0 3h9v1h-9zM0 4h9v1h-9zM0 5h9v1h-9zM0 6h9v1h-9z"/></svg>
<div style="left:1247px;top:533px;width:6px;height:5px;background:#0000ff;"></div>
<div style="left:5px;top:46px;width:257px;height:74px;background:transparent;border:1px solid #ffffff;box-sizing:border-box;width:257px;height:74px"></div>
<div style="left:4px;top:45px;width:257px;height:74px;background:transparent;border:1px solid #808080;box-sizing:border-box"></div>
<div style="left:263px;top:46px;width:961px;height:34px;background:transparent;border:1px solid #ffffff;box-sizing:border-box;width:961px;height:34px"></div>
<div style="left:262px;top:45px;width:961px;height:34px;background:transparent;border:1px solid #808080;box-sizing:border-box"></div>
<div style="left:263px;top:86px;width:961px;height:34px;background:transparent;border:1px solid #ffffff;box-sizing:border-box;width:961px;height:34px"></div>
<div style="left:262px;top:85px;width:961px;height:34px;background:transparent;border:1px solid #808080;box-sizing:border-box"></div>
<div style="left:11px;top:40px;width:36px;height:12px;background:#d4d0c8;"></div>
<div class="t" style="left:12px;top:41.03px;font-size:12px;line-height:12px;font-weight:normal;color:#000;letter-spacing:-0.4px;white-space:pre;">Device</div>
<div style="left:269px;top:40px;width:29px;height:12px;background:#d4d0c8;"></div>
<div class="t" style="left:270px;top:41.03px;font-size:12px;line-height:12px;font-weight:normal;color:#000;letter-spacing:-0.4px;white-space:pre;">Mode</div>
<div style="left:269px;top:80px;width:50px;height:12px;background:#d4d0c8;"></div>
<div class="t" style="left:270px;top:81.03px;font-size:12px;line-height:12px;font-weight:normal;color:#000;letter-spacing:-0.4px;white-space:pre;">Operation</div>
<div class="t" style="right:1213px;top:57.03px;font-size:12px;line-height:12px;font-weight:normal;color:#000;letter-spacing:-0.6px;white-space:pre;">Model</div>
<div class="t" style="left:74px;top:57.03px;font-size:12px;line-height:12px;font-weight:normal;color:#000;letter-spacing:-0.75px;white-space:pre;">ST2000LM003 HN-M201RAD</div>
<div class="t" style="right:1213px;top:73.03px;font-size:12px;line-height:12px;font-weight:normal;color:#000;letter-spacing:-0.6px;white-space:pre;">Serial</div>
<div class="t" style="left:74px;top:73.03px;font-size:12px;line-height:12px;font-weight:normal;color:#000;letter-spacing:-0.75px;white-space:pre;">S34RJ9CF703734</div>
<div class="t" style="right:1213px;top:89.03px;font-size:12px;line-height:12px;font-weight:normal;color:#000;letter-spacing:-0.6px;white-space:pre;">Firmware</div>
<div class="t" style="left:74px;top:89.03px;font-size:12px;line-height:12px;font-weight:normal;color:#000;letter-spacing:-0.75px;white-space:pre;">2BC10004</div>
<div class="t" style="right:1213px;top:105.03px;font-size:12px;line-height:12px;font-weight:normal;color:#000;letter-spacing:-0.6px;white-space:pre;">Capacity</div>
<div class="t" style="left:74px;top:105.03px;font-size:12px;line-height:12px;font-weight:normal;color:#000;letter-spacing:-0.62px;white-space:pre;">1 863.02 GB (3 907 029 168)</div>
<div class="t" style="left:278px;top:62.03px;font-size:12px;line-height:12px;font-weight:bold;color:#000;letter-spacing:0.17px;white-space:pre;">Copy data to"TOSHIBA DT01ACA300 MX60ABB0 S/N:27DZHNZAS"</div>
<div class="t" style="left:275px;top:102.03px;font-size:12px;line-height:12px;font-weight:bold;color:#000;letter-spacing:-0.3px;white-space:pre;">Copying - running</div>
<div class="t" style="left:534px;top:102.03px;font-size:12px;line-height:12px;font-weight:bold;color:#000;letter-spacing:-0.2px;white-space:pre;">LBA =</div>
<div class="t" style="left:584px;top:102.03px;font-size:12px;line-height:12px;font-weight:bold;color:#000;letter-spacing:0.35px;white-space:pre;">338 919 302  [Head-3]</div>
<div style="left:4px;top:121px;width:1220px;height:1px;background:#ffffff;"></div>
<div style="left:4px;top:121px;width:1px;height:745px;background:#ffffff;"></div>
<div style="left:1222px;top:122px;width:1px;height:743px;background:#808080;"></div>
<div style="left:5px;top:864px;width:1218px;height:1px;background:#808080;"></div>
<div style="left:1223px;top:121px;width:1px;height:745px;background:#404040;"></div>
<div style="left:4px;top:865px;width:1220px;height:1px;background:#404040;"></div>
<div style="left:8px;top:127px;width:1195px;height:702px;background:#ffffff;"></div>
<div style="left:9px;top:128px;width:1192px;height:253px;background:linear-gradient(to right, transparent 7px, #fff 7px) 0 0/8px 11px,linear-gradient(to bottom, transparent 10px, #fff 10px) 0 0/8px 11px,linear-gradient(to right, #000 1px, transparent 1px 6px, #000 6px) 0 0/8px 11px,linear-gradient(to bottom, #000 1px, transparent 1px 9px, #000 9px) 0 0/8px 11px,#00ff00"></div>
<div style="left:9px;top:381px;width:632px;height:11px;background:linear-gradient(to right, transparent 7px, #fff 7px) 0 0/8px 11px,linear-gradient(to bottom, transparent 10px, #fff 10px) 0 0/8px 11px,linear-gradient(to right, #000 1px, transparent 1px 6px, #000 6px) 0 0/8px 11px,linear-gradient(to bottom, #000 1px, transparent 1px 9px, #000 9px) 0 0/8px 11px,#00ff00"></div>
<div style="left:641px;top:381px;width:7px;height:10px;background:#000;"></div>
<div style="left:649px;top:381px;width:552px;height:11px;background:linear-gradient(to right, transparent 7px, #fff 7px) 0 0/8px 11px,linear-gradient(to bottom, transparent 10px, #fff 10px) 0 0/8px 11px,linear-gradient(to right, #000 1px, transparent 1px 6px, #000 6px) 0 0/8px 11px,linear-gradient(to bottom, #000 1px, transparent 1px 9px, #000 9px) 0 0/8px 11px,#ffff00"></div>
<div style="left:9px;top:392px;width:136px;height:11px;background:linear-gradient(to right, transparent 7px, #fff 7px) 0 0/8px 11px,linear-gradient(to bottom, transparent 10px, #fff 10px) 0 0/8px 11px,linear-gradient(to right, #000 1px, transparent 1px 6px, #000 6px) 0 0/8px 11px,linear-gradient(to bottom, #000 1px, transparent 1px 9px, #000 9px) 0 0/8px 11px,#ffff00"></div>
<svg style="left:145px;top:392px;" width="7" height="11" shape-rendering="crispEdges"><path fill="#ff00ff" d="M0 0h7v1h-7zM0 1h2v1h-2zM6 1h1v1h-1zM0 2h2v1h-2zM6 2h1v1h-1zM0 3h1v1h-1zM2 3h1v1h-1zM5 3h2v1h-2zM0 4h1v1h-1zM3 4h2v1h-2zM6 4h1v1h-1zM0 5h1v1h-1zM2 5h2v1h-2zM6 5h1v1h-1zM0 6h1v1h-1zM3 6h2v1h-2zM6 6h1v1h-1zM0 7h1v1h-1zM2 7h1v1h-1zM5 7h2v1h-2zM0 8h2v1h-2zM6 8h1v1h-1zM0 9h7v1h-7zM0 10h1v1h-1z"/><path fill="#ffff00" d="M2 1h4v1h-4zM2 2h4v1h-4zM1 3h1v1h-1zM3 3h2v1h-2zM1 4h2v1h-2zM5 4h1v1h-1zM1 5h1v1h-1zM4 5h2v1h-2zM1 6h2v1h-2zM5 6h1v1h-1zM1 7h1v1h-1zM3 7h2v1h-2zM2 8h4v1h-4z"/></svg>
<div style="left:153px;top:392px;width:104px;height:11px;background:linear-gradient(to right, transparent 7px, #fff 7px) 0 0/8px 11px,linear-gradient(to bottom, transparent 10px, #fff 10px) 0 0/8px 11px,linear-gradient(to right, #000 1px, transparent 1px 6px, #000 6px) 0 0/8px 11px,linear-gradient(to bottom, #000 1px, transparent 1px 9px, #000 9px) 0 0/8px 11px,#00ff00"></div>
<div style="left:257px;top:392px;width:944px;height:11px;background:linear-gradient(to right, transparent 7px, #fff 7px) 0 0/8px 11px,linear-gradient(to bottom, transparent 10px, #fff 10px) 0 0/8px 11px,linear-gradient(to right, #000 1px, transparent 1px 6px, #000 6px) 0 0/8px 11px,linear-gradient(to bottom, #000 1px, transparent 1px 9px, #000 9px) 0 0/8px 11px,#fff"></div>
<div style="left:9px;top:403px;width:1192px;height:418px;background:linear-gradient(to right, transparent 7px, #fff 7px) 0 0/8px 11px,linear-gradient(to bottom, transparent 10px, #fff 10px) 0 0/8px 11px,linear-gradient(to right, #000 1px, transparent 1px 6px, #000 6px) 0 0/8px 11px,linear-gradient(to bottom, #000 1px, transparent 1px 9px, #000 9px) 0 0/8px 11px,#fff"></div>
<div style="left:639px;top:408px;width:162px;height:17px;background:#ffffe1;box-sizing:border-box;border:1px solid #000;border-left-color:#d4d0c8;border-top-color:#d4d0c8"></div>
<div class="t" style="left:643px;top:411.03px;font-size:12px;line-height:12px;font-weight:normal;color:#000;letter-spacing:-0.05px;white-space:pre;">LBA =  338 919 207 (Head 3)</div>
<div style="left:1203px;top:127px;width:1px;height:702px;background:#808080;"></div>
<div style="left:1204px;top:143px;width:16px;height:669px;background:conic-gradient(#fff 25%,#d4d0c8 0 50%,#fff 0 75%,#d4d0c8 0) 0 0/2px 2px"></div>
<div style="left:1204px;top:127px;width:16px;height:16px;background:#d4d0c8;box-shadow: inset -1px -1px #404040, inset 1px 1px #d4d0c8, inset -2px -2px #808080, inset 2px 2px #ffffff"></div>
<div style="left:1204px;top:812px;width:16px;height:16px;background:#d4d0c8;box-shadow: inset -1px -1px #404040, inset 1px 1px #d4d0c8, inset -2px -2px #808080, inset 2px 2px #ffffff"></div>
<div style="left:1204px;top:200px;width:16px;height:8px;background:#d4d0c8;box-shadow: inset -1px -1px #404040, inset 1px 1px #d4d0c8, inset -2px -2px #808080, inset 2px 2px #ffffff"></div>
<svg style="left:1208px;top:133px" width="7" height="4" shape-rendering="crispEdges"><path d="M3 0h1v1h1v1h1v1h1v1H0V3h1V2h1V1h1z"/></svg>
<svg style="left:1208px;top:818px" width="7" height="4" shape-rendering="crispEdges"><path d="M0 0h7v1H6v1H5v1H4v1H3V3H2V2H1V1H0z"/></svg>
<div style="left:1221px;top:122px;width:1px;height:742px;background:#d4d0c8;"></div>
<div class="t" style="left:23px;top:841.03px;font-size:12px;line-height:12px;font-weight:normal;color:#000;letter-spacing:-0.5px;white-space:pre;">LBA map</div>
<div style="left:85px;top:836px;width:121px;height:21px;background:#ffffff;box-shadow: inset 1px 1px #808080, inset -1px -1px #ffffff, inset 2px 2px #404040, inset -2px -2px #d4d0c8"></div>
<div class="t" style="left:89px;top:841.03px;font-size:12px;line-height:12px;font-weight:normal;color:#000;letter-spacing:0px;white-space:pre;">0</div>
<div style="left:187px;top:838px;width:17px;height:17px;background:#d4d0c8;box-shadow: inset -1px -1px #404040, inset 1px 1px #d4d0c8, inset -2px -2px #808080, inset 2px 2px #ffffff"></div>
<div class="t" style="left:189px;top:842px;font-size:10px;line-height:10px;font-weight:bold">D</div>
<svg style="left:196px;top:841px" width="6" height="9" shape-rendering="crispEdges"><path fill="#f00" d="M2 0h2v5h2v1H5v1H4v1H2V7H1V6H0V5h2z"/></svg>
<div style="left:209px;top:836px;width:69px;height:21px;background:#d4d0c8;box-shadow: inset -1px -1px #404040, inset 1px 1px #ffffff, inset -2px -2px #808080"></div>
<div class="t" style="left:43px;width:400px;text-align:center;top:841.03px;font-size:12px;line-height:12px;font-weight:normal;color:#000;letter-spacing:-0.5px;white-space:pre;">Go to</div>
<div style="left:298px;top:841px;width:2px;height:11px;background:#000;"></div>
<div style="left:303px;top:841px;width:2px;height:11px;background:#000;"></div>
<div style="left:1117px;top:834px;width:94px;height:25px;background:#d4d0c8;box-shadow: inset -1px -1px #000, inset 1px 1px #000, inset -2px -2px #404040, inset 2px 2px #ffffff, inset -3px -3px #808080"></div>
<div style="left:1121px;top:838px;width:86px;height:17px;box-sizing:border-box;border:1px dotted #000"></div>
<div class="t" style="left:964px;width:400px;text-align:center;top:841.03px;font-size:12px;line-height:12px;font-weight:normal;color:#000;letter-spacing:-0.5px;white-space:pre;">Legend</div>
<div style="left:6px;top:866px;width:41px;height:19px;background:#d4d0c8;box-shadow: inset 1px 0 #ffffff, inset -1px -1px #404040, inset -2px -2px #808080; border-radius:0 0 2px 2px"></div>
<div style="left:91px;top:866px;width:41px;height:19px;background:#d4d0c8;box-shadow: inset 1px 0 #808080, inset -1px -1px #404040, inset -2px -2px #808080; border-radius:0 0 2px 2px"></div>
<div style="left:46px;top:865px;width:45px;height:22px;background:#d4d0c8;box-shadow: inset 1px 0 #ffffff, inset -1px -1px #404040, inset -2px -2px #808080; border-radius:0 0 2px 2px"></div>
<div class="t" style="left:13px;top:870.03px;font-size:12px;line-height:12px;font-weight:normal;color:#000;letter-spacing:-0.7px;white-space:pre;">Log</div>
<div class="t" style="left:54px;top:872.03px;font-size:12px;line-height:12px;font-weight:normal;color:#000;letter-spacing:-0.5px;white-space:pre;">Map</div>
<div class="t" style="left:96px;top:870.03px;font-size:12px;line-height:12px;font-weight:normal;color:#000;letter-spacing:-0.6px;white-space:pre;">Status</div>
<div class="t" style="left:414px;width:400px;text-align:center;top:873.03px;font-size:12px;line-height:12px;font-weight:bold;color:#000;letter-spacing:0px;white-space:pre;">5 %</div>
<div style="left:4px;top:887px;width:1219px;height:1px;background:#808080;"></div>
<div style="left:4px;top:887px;width:1px;height:9px;background:#808080;"></div>
<div style="left:4px;top:895px;width:1220px;height:1px;background:#ffffff;"></div>
<div style="left:1223px;top:887px;width:1px;height:9px;background:#ffffff;"></div>
<div style="left:6px;top:889px;width:3px;height:5px;background:#0a246a;"></div>
<div style="left:11px;top:889px;width:3px;height:5px;background:#0a246a;"></div>
<div style="left:16px;top:889px;width:3px;height:5px;background:#0a246a;"></div>
<div style="left:21px;top:889px;width:3px;height:5px;background:#0a246a;"></div>
<div style="left:26px;top:889px;width:3px;height:5px;background:#0a246a;"></div>
<div style="left:31px;top:889px;width:3px;height:5px;background:#0a246a;"></div>
<div style="left:36px;top:889px;width:3px;height:5px;background:#0a246a;"></div>
<div style="left:41px;top:889px;width:3px;height:5px;background:#0a246a;"></div>
<div style="left:46px;top:889px;width:3px;height:5px;background:#0a246a;"></div>
<div style="left:51px;top:889px;width:3px;height:5px;background:#0a246a;"></div>
<div style="left:56px;top:889px;width:3px;height:5px;background:#0a246a;"></div>
<div style="left:61px;top:889px;width:3px;height:5px;background:#0a246a;"></div>
<div style="left:66px;top:889px;width:3px;height:5px;background:#0a246a;"></div>
<div style="left:2px;top:906px;width:328px;height:44px;background:transparent;border:1px solid #ffffff;box-sizing:border-box;width:328px;height:44px"></div>
<div style="left:1px;top:905px;width:328px;height:44px;background:transparent;border:1px solid #808080;box-sizing:border-box"></div>
<div style="left:7px;top:899px;width:179px;height:13px;background:#d4d0c8;"></div>
<div class="t" style="left:8px;top:898.62px;font-size:13.7px;line-height:13.7px;font-weight:normal;color:#000;letter-spacing:-0.2px;white-space:pre;">Status register (SATA3)-[PIO4]</div>
<div style="left:12px;top:915px;width:22px;height:12px;background:#00ff00;box-shadow: inset 0 0 0 1px #808080"></div>
<div class="t" style="left:-178px;width:400px;text-align:center;top:931.03px;font-size:12px;line-height:12px;font-weight:normal;color:#003d8f;letter-spacing:-0.8px;white-space:pre;">BSY</div>
<div style="left:52px;top:915px;width:22px;height:12px;background:#00ff00;box-shadow: inset 0 0 0 1px #808080"></div>
<div class="t" style="left:-138px;width:400px;text-align:center;top:931.03px;font-size:12px;line-height:12px;font-weight:normal;color:#003d8f;letter-spacing:-0.8px;white-space:pre;">DRD</div>
<div style="left:92px;top:915px;width:22px;height:12px;background:#c0c0c0;box-shadow: inset 0 0 0 1px #808080"></div>
<div class="t" style="left:-98px;width:400px;text-align:center;top:931.03px;font-size:12px;line-height:12px;font-weight:normal;color:#003d8f;letter-spacing:-0.8px;white-space:pre;">DWF</div>
<div style="left:132px;top:915px;width:22px;height:12px;background:#00ff00;box-shadow: inset 0 0 0 1px #808080"></div>
<div class="t" style="left:-58px;width:400px;text-align:center;top:931.03px;font-size:12px;line-height:12px;font-weight:normal;color:#003d8f;letter-spacing:-0.8px;white-space:pre;">DSC</div>
<div style="left:172px;top:915px;width:22px;height:12px;background:#c0c0c0;box-shadow: inset 0 0 0 1px #808080"></div>
<div class="t" style="left:-18px;width:400px;text-align:center;top:931.03px;font-size:12px;line-height:12px;font-weight:normal;color:#003d8f;letter-spacing:-0.8px;white-space:pre;">DRQ</div>
<div style="left:212px;top:915px;width:22px;height:12px;background:#c0c0c0;box-shadow: inset 0 0 0 1px #808080"></div>
<div class="t" style="left:22px;width:400px;text-align:center;top:931.03px;font-size:12px;line-height:12px;font-weight:normal;color:#003d8f;letter-spacing:-0.8px;white-space:pre;">CRR</div>
<div style="left:252px;top:915px;width:22px;height:12px;background:#c0c0c0;box-shadow: inset 0 0 0 1px #808080"></div>
<div class="t" style="left:62px;width:400px;text-align:center;top:931.03px;font-size:12px;line-height:12px;font-weight:normal;color:#003d8f;letter-spacing:-0.8px;white-space:pre;">IDX</div>
<div style="left:292px;top:915px;width:22px;height:12px;background:#c0c0c0;box-shadow: inset 0 0 0 1px #808080"></div>
<div class="t" style="left:102px;width:400px;text-align:center;top:931.03px;font-size:12px;line-height:12px;font-weight:normal;color:#003d8f;letter-spacing:-0.8px;white-space:pre;">ERR</div>
<div style="left:331px;top:906px;width:329px;height:44px;background:transparent;border:1px solid #ffffff;box-sizing:border-box;width:329px;height:44px"></div>
<div style="left:330px;top:905px;width:329px;height:44px;background:transparent;border:1px solid #808080;box-sizing:border-box"></div>
<div style="left:337px;top:899px;width:127px;height:13px;background:#d4d0c8;"></div>
<div class="t" style="left:338px;top:898.62px;font-size:13.7px;line-height:13.7px;font-weight:normal;color:#000;letter-spacing:-0.3px;white-space:pre;">Error register (SATA3)</div>
<div style="left:342px;top:915px;width:22px;height:12px;background:#c0c0c0;box-shadow: inset 0 0 0 1px #808080"></div>
<div class="t" style="left:152px;width:400px;text-align:center;top:931.03px;font-size:12px;line-height:12px;font-weight:normal;color:#003d8f;letter-spacing:-0.8px;white-space:pre;">BBK</div>
<div style="left:382px;top:915px;width:22px;height:12px;background:#c0c0c0;box-shadow: inset 0 0 0 1px #808080"></div>
<div class="t" style="left:192px;width:400px;text-align:center;top:931.03px;font-size:12px;line-height:12px;font-weight:normal;color:#003d8f;letter-spacing:-0.8px;white-space:pre;">UNC</div>
<div style="left:422px;top:915px;width:22px;height:12px;background:#c0c0c0;box-shadow: inset 0 0 0 1px #808080"></div>
<div style="left:462px;top:915px;width:22px;height:12px;background:#c0c0c0;box-shadow: inset 0 0 0 1px #808080"></div>
<div class="t" style="left:272px;width:400px;text-align:center;top:931.03px;font-size:12px;line-height:12px;font-weight:normal;color:#003d8f;letter-spacing:-0.8px;white-space:pre;">INF</div>
<div style="left:502px;top:915px;width:22px;height:12px;background:#c0c0c0;box-shadow: inset 0 0 0 1px #808080"></div>
<div style="left:542px;top:915px;width:22px;height:12px;background:#c0c0c0;box-shadow: inset 0 0 0 1px #808080"></div>
<div class="t" style="left:352px;width:400px;text-align:center;top:931.03px;font-size:12px;line-height:12px;font-weight:normal;color:#003d8f;letter-spacing:-0.8px;white-space:pre;">ABR</div>
<div style="left:582px;top:915px;width:22px;height:12px;background:#c0c0c0;box-shadow: inset 0 0 0 1px #808080"></div>
<div class="t" style="left:392px;width:400px;text-align:center;top:931.03px;font-size:12px;line-height:12px;font-weight:normal;color:#003d8f;letter-spacing:-0.8px;white-space:pre;">TON</div>
<div style="left:622px;top:915px;width:22px;height:12px;background:#c0c0c0;box-shadow: inset 0 0 0 1px #808080"></div>
<div class="t" style="left:432px;width:400px;text-align:center;top:931.03px;font-size:12px;line-height:12px;font-weight:normal;color:#003d8f;letter-spacing:-0.8px;white-space:pre;">AMN</div>
<div style="left:661px;top:906px;width:52px;height:44px;background:transparent;border:1px solid #ffffff;box-sizing:border-box;width:52px;height:44px"></div>
<div style="left:660px;top:905px;width:52px;height:44px;background:transparent;border:1px solid #808080;box-sizing:border-box"></div>
<div style="left:667px;top:899px;width:45px;height:13px;background:#d4d0c8;"></div>
<div class="t" style="left:668px;top:898.62px;font-size:13.7px;line-height:13.7px;font-weight:normal;color:#000;letter-spacing:-0.2px;white-space:pre;">SATA-II</div>
<div style="left:676px;top:915px;width:22px;height:12px;background:#00ff00;box-shadow: inset 0 0 0 1px #808080"></div>
<div class="t" style="left:486px;width:400px;text-align:center;top:931.03px;font-size:12px;line-height:12px;font-weight:normal;color:#003d8f;letter-spacing:-0.8px;white-space:pre;">PHY</div>
<div style="left:714px;top:906px;width:52px;height:44px;background:transparent;border:1px solid #ffffff;box-sizing:border-box;width:52px;height:44px"></div>
<div style="left:713px;top:905px;width:52px;height:44px;background:transparent;border:1px solid #808080;box-sizing:border-box"></div>
<div style="left:720px;top:899px;width:30px;height:13px;background:#d4d0c8;"></div>
<div class="t" style="left:721px;top:898.62px;font-size:13.7px;line-height:13.7px;font-weight:normal;color:#000;letter-spacing:-0.6px;white-space:pre;">DMA</div>
<div style="left:729px;top:915px;width:22px;height:12px;background:#c0c0c0;box-shadow: inset 0 0 0 1px #808080"></div>
<div class="t" style="left:539px;width:400px;text-align:center;top:931.03px;font-size:12px;line-height:12px;font-weight:normal;color:#003d8f;letter-spacing:-0.8px;white-space:pre;">RQ</div>
<div style="left:1202px;top:906px;width:78px;height:44px;background:transparent;border:1px solid #ffffff;box-sizing:border-box;width:78px;height:44px"></div>
<div style="left:1201px;top:905px;width:78px;height:44px;background:transparent;border:1px solid #808080;box-sizing:border-box"></div>
<div style="left:1209px;top:899px;width:38px;height:13px;background:#d4d0c8;"></div>
<div class="t" style="left:1210px;top:898.62px;font-size:13.7px;line-height:13.7px;font-weight:normal;color:#000;letter-spacing:-0.4px;white-space:pre;">Power</div>
<div style="left:1211px;top:915px;width:22px;height:12px;background:#00ff00;box-shadow: inset 0 0 0 1px #808080"></div>
<div class="t" style="left:1022px;width:400px;text-align:center;top:931.03px;font-size:12px;line-height:12px;font-weight:normal;color:#003d8f;letter-spacing:-0.8px;white-space:pre;">5V</div>
<div style="left:1248px;top:915px;width:22px;height:12px;background:#00ff00;box-shadow: inset 0 0 0 1px #808080"></div>
<div class="t" style="left:1059px;width:400px;text-align:center;top:931.03px;font-size:12px;line-height:12px;font-weight:normal;color:#003d8f;letter-spacing:-0.8px;white-space:pre;">12V</div>
<div style="left:0px;top:951px;width:1280px;height:1px;background:#ffffff;"></div>
<div style="left:1231px;top:45px;width:1px;height:855px;background:#808080;"></div>
<div style="left:1232px;top:45px;width:1px;height:855px;background:#ffffff;"></div>
</body></html>
